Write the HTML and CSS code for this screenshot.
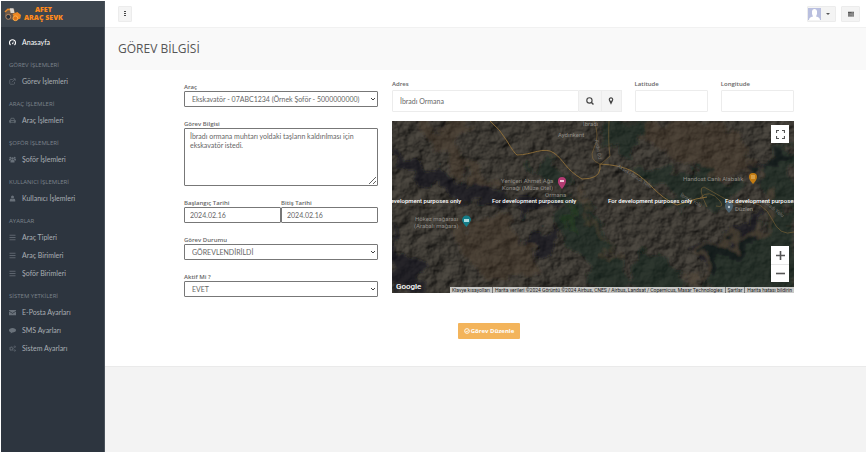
FILE: index.html
```html
<!DOCTYPE html>
<html lang="tr">
<head>
<meta charset="utf-8">
<title>Görev Bilgisi</title>
<link rel="stylesheet" href="styles.css">
</head>
<body>
<svg class="sprite" aria-hidden="true">
  <symbol id="gauge" viewBox="0 0 14 14"><path d="M3 12A6 6 0 1 1 11 12" fill="none" stroke="currentColor" stroke-width="2.200"/><path d="M5.700 10 9 4 8.500 10.500z" fill="currentColor"/></symbol>
  <symbol id="external" viewBox="0 0 14 14"><path d="M7.500 3H3Q1.500 3 1.500 4.500V11Q1.500 12.500 3 12.500H9.500Q11 12.500 11 11V8M6 8.500 12 2M8.500 1.500H12.500V5.500" fill="none" stroke="currentColor" stroke-width="1.300"/></symbol>
  <symbol id="car" viewBox="0 0 14 14"><path d="M3 6.500 4.200 2.500H9.800L11 6.500M1 7H13V10.500H1ZM2.500 10.500V12.500M11.500 10.500V12.500" fill="none" stroke="currentColor" stroke-width="1.500"/><path d="M2 8h2v1.500H2zM10 8h2v1.500h-2z" fill="currentColor"/></symbol>
  <symbol id="users" viewBox="0 0 14 14"><g fill="currentColor"><circle cx="7" cy="5" r="2.600"/><circle cx="2.600" cy="3.500" r="1.800"/><circle cx="11.400" cy="3.500" r="1.800"/><path d="M3 13V10Q3 7.800 5 7.800H9Q11 7.800 11 10V13ZM0 9V6.500Q0 5.500 1 5.500H3.500L4 7 2.500 9ZM14 9V6.500Q14 5.500 13 5.500H10.500L10 7 11.500 9Z"/></g></symbol>
  <symbol id="user" viewBox="0 0 14 14"><g fill="currentColor"><circle cx="7" cy="4.200" r="3"/><path d="M1.500 12.800V10.500Q1.500 7 4.500 7 7 9.500 9.500 7 12.500 7 12.500 10.500V12.800Z"/></g></symbol>
  <symbol id="bars" viewBox="0 0 14 14"><path d="M1 2.500H13M1 7H13M1 11.500H13" stroke="currentColor" stroke-width="1.600"/></symbol>
  <symbol id="mail" viewBox="0 0 14 14"><path d="M0 2H14V3.500L7 8 0 3.500ZM0 5.200 7 9.700 14 5.200V12.500H0Z" fill="currentColor"/></symbol>
  <symbol id="comment" viewBox="0 0 14 14"><path d="M7 2C11 2 14 4 14 6.500S11 11 7 11L3 13.200 3.800 10.500C1.500 9.800 0 8.300 0 6.500 0 4 3 2 7 2Z" fill="currentColor"/></symbol>
  <symbol id="cogs" viewBox="0 0 14 14"><g fill="none" stroke="currentColor"><circle cx="4.800" cy="7.300" r="2.600" stroke-width="1.600"/><circle cx="4.800" cy="7.300" r="4" stroke-width="1.400" stroke-dasharray="1.600 1.540"/><circle cx="11.500" cy="3.500" r="1.500" stroke-width="1.300"/><circle cx="11.500" cy="11" r="1.500" stroke-width="1.300"/></g></symbol>
  <symbol id="search" viewBox="0 0 14 14"><circle cx="6" cy="6" r="4.600" fill="none" stroke="currentColor" stroke-width="2"/><path d="M9.200 9.200 13 13" stroke="currentColor" stroke-width="2.400"/></symbol>
  <symbol id="pin" viewBox="0 0 14 14"><path fill-rule="evenodd" d="M7 0.500C9.500 0.500 11 2.300 11 4.500 11 6.500 8.500 10.500 7 13.500 5.500 10.500 3 6.500 3 4.500 3 2.300 4.500 0.500 7 0.500ZM7 2.600A2 2 0 1 0 7 6.600 2 2 0 1 0 7 2.600Z" fill="currentColor"/></symbol>
  <symbol id="check" viewBox="0 0 14 14"><circle cx="7" cy="7" r="5.500" fill="none" stroke="currentColor" stroke-width="2"/><path d="M4 7 6.300 9.300 10.300 5.200" fill="none" stroke="currentColor" stroke-width="2"/></symbol>
</svg>
<div class="app">
  <aside class="sidebar">
    <a class="brand" href="#">
      <svg class="brand-mark" viewBox="0 0 20 16" aria-hidden="true">
        <path d="M2 5 5 2 11 3 12 7 17 9 18 12 14 15 3 13 1 9Z" fill="#6f5947"/>
        <path d="M1 6 4 3 9 4 10 6" fill="none" stroke="#e98b2e" stroke-width="1.500"/>
        <path d="M6 2H10L11 7H7Z" fill="#ddd5cc"/>
        <path d="M9 8 14 6 18 9 17 13 12 14Z" fill="#ee8722"/>
        <circle cx="4.500" cy="11" r="2.600" fill="#29313b" stroke="#b98b68"/>
        <circle cx="12" cy="12.500" r="2.500" fill="#df7318" stroke="#ffb049"/>
      </svg>
      <span class="brand-name">AFET<br>ARAÇ SEVK</span>
    </a>
    <nav class="menu">
      <a class="item active" href="#"><svg><use href="#gauge"/></svg>Anasayfa</a>
      <h2>GÖREV İŞLEMLERİ</h2>
      <a class="item" href="#"><svg><use href="#external"/></svg>Görev İşlemleri</a>
      <h2>ARAÇ İŞLEMLERİ</h2>
      <a class="item" href="#"><svg><use href="#car"/></svg>Araç İşlemleri</a>
      <h2>ŞOFÖR İŞLEMLERİ</h2>
      <a class="item" href="#"><svg><use href="#users"/></svg>Şoför İşlemleri</a>
      <h2>KULLANICI İŞLEMLERİ</h2>
      <a class="item" href="#"><svg><use href="#user"/></svg>Kullanıcı İşlemleri</a>
      <h2>AYARLAR</h2>
      <a class="item" href="#"><svg><use href="#bars"/></svg>Araç Tipleri</a>
      <a class="item" href="#"><svg><use href="#bars"/></svg>Araç Birimleri</a>
      <a class="item" href="#"><svg><use href="#bars"/></svg>Şoför Birimleri</a>
      <h2>SİSTEM YETKİLERİ</h2>
      <a class="item" href="#"><svg><use href="#mail"/></svg>E-Posta Ayarları</a>
      <a class="item" href="#"><svg><use href="#comment"/></svg>SMS Ayarları</a>
      <a class="item" href="#"><svg><use href="#cogs"/></svg>Sistem Ayarları</a>
    </nav>
  </aside>
  <div class="page">
    <header class="topbar">
      <button class="tool" type="button" aria-label="Menü"><svg viewBox="0 0 6 6"><path d="M2 0H4V1H2ZM2 2H4V3H2ZM2 4H4V5H2Z" fill="#444"/></svg></button>
      <div class="tools">
        <button class="tool profile" type="button" aria-label="Profil">
          <svg class="avatar" viewBox="0 0 13 12"><path d="M0 0H13V12H0Z" fill="#b9bfdf"/><path d="M1 12Q1 9 5 8.500 3.500 6 4 3 4.500 1 6.500 1T9 3Q9.500 6 8 8.500 12 9 12 12Z" fill="#fff"/></svg>
          <span class="caret"></span>
        </button>
        <button class="tool" type="button" aria-label="Görevler"><svg viewBox="0 0 14 14"><path d="M0 2H14V5H0ZM0 6H14V9H0ZM0 10H14V13H0Z" fill="#555"/><path d="M8 3.500H13M5 7.500H13M9 11.500H13" stroke="#bbb"/></svg></button>
      </div>
    </header>
    <div class="heading"><h1>GÖREV BİLGİSİ</h1></div>
    <main class="content">
      <form class="form">
        <div class="details">
          <div class="field"><label for="arac">Araç</label>
            <select id="arac"><option>Ekskavatör - 07ABC1234 (Örnek Şoför - 5000000000)</option></select></div>
          <div class="field"><label for="bilgi">Görev Bilgisi</label>
            <textarea id="bilgi" spellcheck="false">İbradı ormana muhtarı yoldaki taşların kaldırılması için ekskavatör istedi.</textarea></div>
          <div class="dates">
            <div class="field"><label for="bas">Başlangıç Tarihi</label><input id="bas" type="text" value="2024.02.16"></div>
            <div class="field"><label for="bit">Bitiş Tarihi</label><input id="bit" type="text" value="2024.02.16"></div>
          </div>
          <div class="field"><label for="durum">Görev Durumu</label>
            <select id="durum"><option>GÖREVLENDİRİLDİ</option></select></div>
          <div class="field"><label for="aktif">Aktif Mi ?</label>
            <select id="aktif"><option>EVET</option></select></div>
        </div>
        <div class="location">
          <div class="place">
            <div class="field"><label for="adres">Adres</label>
              <div class="group"><input id="adres" type="text" value="İbradı Ormana"><button type="button" aria-label="Ara"><svg><use href="#search"/></svg></button><button type="button" aria-label="Konum"><svg><use href="#pin"/></svg></button></div></div>
            <div class="field"><label for="lat">Latitude</label><input id="lat" type="text"></div>
            <div class="field"><label for="lng">Longitude</label><input id="lng" type="text"></div>
          </div>
          <div class="map">
            <svg class="terrain" viewBox="0 0 402 172" preserveAspectRatio="xMidYMid slice">
              <defs>
                <filter id="ground" x="0" y="0" width="100%" height="100%" color-interpolation-filters="sRGB">
                  <feTurbulence type="fractalNoise" baseFrequency="0.07 0.08" numOctaves="6" seed="12" result="n"/>
                  <feColorMatrix in="n" values="0 0 0 0 0  0 0 0 0 0  0 0 0 0 0  1 0 0 0 0"/>
                  <feDiffuseLighting surfaceScale="3" diffuseConstant="1.1" lighting-color="#48443d">
                    <feDistantLight azimuth="220" elevation="50"/>
                  </feDiffuseLighting>
                </filter>
                <filter id="rough" x="-20%" y="-20%" width="140%" height="140%">
                  <feTurbulence type="fractalNoise" baseFrequency="0.05" numOctaves="6" seed="3" result="n"/>
                  <feDisplacementMap in="SourceGraphic" in2="n" scale="36" xChannelSelector="R" yChannelSelector="G" result="d"/>
                  <feGaussianBlur in="d" stdDeviation="1"/>
                </filter>
              </defs>
              <rect width="402" height="172" filter="url(#ground)"/>
              <g filter="url(#rough)">
                <g fill="#4d3e30" opacity="0.350"><path d="M20 0H85L65 25 110 70 85 68 45 35Z"/><path d="M225 0H330L370 50 330 60 270 30Z"/><path d="M50 100 120 95 150 150 90 160Z"/></g>
                <g fill="#17261d" opacity="0.550"><path d="M138 42 165 38 185 65 150 62Z"/><path d="M155 75 195 78 240 172H205L165 105Z"/><path d="M204 0H250L240 40 215 20Z"/><path d="M235 48 310 50 350 68 330 85 285 85Z"/><path d="M375 40 402 22V172H305L315 130 365 115 380 85 360 65Z"/><path d="M250 125 295 150 290 172H235Z"/></g>
                <g fill="#10171a" opacity="0.650"><path d="M0 28 50 52 90 66 122 80 110 87 60 74 10 50Z"/><path d="M125 82 165 70 160 90 130 92Z"/><path d="M130 115 165 108 160 140 140 132Z"/><path d="M300 133 340 114 372 85 363 118 320 150Z"/><path d="M360 48 402 30 390 55Z"/><path d="M0 108 30 145 25 172H0Z"/></g>
                <path d="M165 83 183 90 182 112Z" fill="#21421f" opacity="0.600"/>
                <path d="M382 65Q370 78 378 92T352 116Q325 122 310 140T298 172" fill="none" stroke="#55483a" stroke-width="4" opacity="0.700"/>
                <path d="M192 60Q190 90 207 114T225 140" fill="none" stroke="#5a4b38" stroke-width="2" opacity="0.600"/>
              </g>
              <g fill="none" stroke="#91703a" stroke-width="0.900">
                <path d="M98 0Q108 8 115 20T125 34C140 34 152 25 162 32S173 48 190 58Q207 58 208 48V43Q228 44 240 50C258 60 264 75 285 84L304 78 315 76"/>
                <path d="M202 0Q208 15 202 27T208 43M217 0Q216 22 218 35L209 43M315 86Q305 66 312 66L337 80 350 84M308 77Q317 67 328 80 333 87 324 85M350 80Q372 80 380 98T402 111" stroke-width="0.700" opacity="0.700"/>
              </g>
              <g class="places">
                <text x="191" y="5">İbradı</text><text x="166" y="16">Aydınkent</text>
                <text x="109" y="62">Yeniçeri Ahmet Ağa</text><text x="110" y="69">Konağı (Müze Otel)</text><text x="153" y="76">Ormana</text>
                <text x="23" y="100">Hökez mağarası</text><text x="22" y="107">(Arabalı mağara)</text>
                <text x="291" y="60">Handost Canlı Alabalık</text><text x="343" y="90">Düzlen</text>
              </g>
              <g class="places roads">
                <text x="203" y="19" transform="rotate(80 203 19)">Aydın Cd.</text><text x="225" y="46" transform="rotate(32 225 46)">Akseki-İbradı Yolu</text>
                <text x="288" y="75" transform="rotate(28 288 75)">İbradı Yolu</text><text x="372" y="82" transform="rotate(38 372 82)">İbradı Yolu</text>
              </g>
              <g><path d="M170 68Q165 62 166 60A4 4 0 1 1 174 60Q174 63 170 68" fill="#b33b72"/><path d="M168 59H172V61H168Z" fill="#f3c5d8"/>
              <path d="M74.500 106Q70 101 70 99A4 4 0 1 1 79 99Q78 102 74.500 106" fill="#147c87"/><path d="M72 98H77V101H72Z" fill="#a9dce0"/>
              <path d="M361 63Q357 59 357 56A4 4 0 1 1 365 56Q365 59 361 63" fill="#c27b12"/><path d="M360 54V58M362 54V58" stroke="#f5d398" stroke-width="0.800"/>
              <path d="M337 92Q333 88 333 85A4 4 0 1 1 341 85Q341 88 337 92" fill="#4e6370"/><circle cx="337" cy="86" r="1.200" fill="#b9c6ce"/></g>
              <g class="notice"><text x="-15" y="82">For development purposes only</text><text x="100" y="82">For development purposes only</text><text x="216" y="82">For development purposes only</text><text x="333" y="82">For development purposes only</text></g>
            </svg>
            <button class="fullscreen" type="button" aria-label="Tam ekran"><svg viewBox="0 0 9 9"><path d="M0.500 3V0.500H3M6 0.500H8.500V3M8.500 6V8.500H6M3 8.500H0.500V6" fill="none" stroke="#555" stroke-width="1.200"/></svg></button>
            <div class="zoom">
              <button type="button" aria-label="Yakınlaştır"><svg viewBox="0 0 9 9"><path d="M0 4.500H9M4.500 0V9" stroke="#555" stroke-width="1.600"/></svg></button>
              <button type="button" aria-label="Uzaklaştır"><svg viewBox="0 0 9 9"><path d="M0 4.500H9" stroke="#555" stroke-width="1.600"/></svg></button>
            </div>
            <span class="google">Google</span>
            <div class="credits"><a href="#">Klavye kısayolları</a><span>Harita verileri ©2024 Görüntü ©2024 Airbus, CNES / Airbus, Landsat / Copernicus, Maxar Technologies</span><a href="#">Şartlar</a><a href="#">Harita hatası bildirin</a></div>
          </div>
        </div>
        <button class="submit" type="submit"><svg><use href="#check"/></svg>Görev Düzenle</button>
      </form>
    </main>
  </div>
</div>
</body>
</html>
```
FILE: styles.css
```css
* { box-sizing: border-box; }
body { margin: 0; background: #fff; color: #666; font: 6px/8px "Open Sans", "Noto Sans", sans-serif; }
a { color: inherit; text-decoration: none; }
button, input, select, textarea { font: inherit; color: inherit; margin: 0; }
input, select, textarea { font-family: Lato, sans-serif; font-size: 7px; }
button { border: 0; padding: 0; background: #f4f4f4; display: flex; align-items: center; justify-content: center; }
h1, h2 { margin: 0; font-weight: 400; }
svg { display: block; flex: none; }
.sprite { position: absolute; width: 0; height: 0; }

.app { display: flex; min-height: 100vh; padding: 1px; }
.sidebar { flex: 0 0 104px; background: #2d353f; border-right: 1px solid #4a525b; }
.brand { display: flex; align-items: center; gap: 1px; height: 26px; padding-left: 3px; background: #3d454e; }
.brand-mark { width: 19px; height: 16px; }
.brand-name { color: #ff8a1c; font-size: 7px; line-height: 8px; font-weight: 800; text-align: center; }
.menu { padding-top: 6px; }
.menu h2 { height: 14px; margin-top: 7px; padding-left: 8px; color: #7c838b; font-size: 6px; line-height: 14px; }
.item { display: flex; align-items: center; gap: 6px; height: 18px; padding-left: 8px; color: #a9aeb3; font-family: Lato, sans-serif; font-size: 7px; }
.item svg { width: 7px; height: 7px; color: #69717a; }
.item.active, .item.active svg { color: #fff; }

.page { flex: 1; min-width: 0; background: #f3f3f3; }
.topbar { display: flex; align-items: center; justify-content: space-between; height: 26px; padding: 0 6px 0 13px; background: #fff; }
.tools { display: flex; gap: 5px; }
.tool { width: 14px; height: 16px; border: 1px solid #ececec; border-radius: 1px; }
.tool svg { width: 6px; height: 6px; }
.tools .tool { width: 19px; }
.tools .profile { width: 29px; gap: 5px; padding-right: 5px; }
.profile .avatar { width: 13px; height: 12px; }
.caret { border: 2px solid transparent; border-top-color: #555; border-bottom: 0; }
.heading { height: 43px; padding: 0 13px; background: #f9f9f9; border-top: 1px solid #f1f1f1; display: flex; align-items: center; }
h1 { font-size: 12px; line-height: 16px; color: #555; }
.content { background: #fff; border-bottom: 1px solid #eaeaea; padding: 10px 72px 27px 79px; }
.form { display: grid; grid-template-columns: minmax(0, 194fr) minmax(0, 402fr); column-gap: 14px; row-gap: 26px; }
.details { display: grid; align-content: start; gap: 13px; padding-top: 3px; }
.dates { display: grid; grid-template-columns: 1fr 1fr; }
.field { display: flex; flex-direction: column; min-width: 0; }
label { font-weight: 600; line-height: 8px; }
input, select, textarea { width: 100%; background: #fff; border: 1px solid #777; border-radius: 1px; }
.details input, .details select { height: 16px; padding: 0 5px; }
select { appearance: none; background: #fff url("data:image/svg+xml,%3Csvg xmlns='http://www.w3.org/2000/svg' viewBox='0 0 6 4'%3E%3Cpath d='M1 1l2 2 2-2' fill='none' stroke='%23444'/%3E%3C/svg%3E") no-repeat right 1px center / 6px 4px; }
.details select { padding: 0 7px; }
textarea { display: block; height: 58px; padding: 3px 5px; line-height: 9px; resize: vertical; }

.place { display: grid; grid-template-columns: minmax(0, 229fr) minmax(0, 73fr) minmax(0, 73fr); gap: 13px; padding-bottom: 9px; }
.place label { height: 10px; }
.place input { height: 22px; border-color: #ececec; padding: 0 7px; }
.group { display: flex; }
.group input { flex: 1; min-width: 0; border-radius: 1px 0 0 1px; }
.group button { width: 23px; height: 22px; border: 1px solid #ececec; border-left: 0; color: #444; }
.group button:last-child { width: 20px; }
.group svg { width: 8px; height: 8px; }

.map { position: relative; overflow: hidden; height: 172px; background: #2d2d29; }
.terrain { width: 100%; height: 100%; font-family: Roboto, sans-serif; }
.places { font-size: 6px; fill: #918d87; }
.roads { font-size: 5px; fill: #77736e; }
.notice { font-size: 6px; font-weight: 500; fill: #fff; }
.map button { width: 18px; height: 18px; background: #fff; }
.map button svg { width: 9px; height: 9px; }
.fullscreen, .zoom, .google, .credits { position: absolute; }
.fullscreen { top: 4px; right: 5px; }
.zoom { right: 5px; bottom: 11px; background: #fff; }
.zoom button + button { border-top: 1px solid #e6e6e6; }
.google { left: 4px; bottom: 1px; color: #fff; font: 500 8px/10px Roboto, sans-serif; }
.credits { right: 0; bottom: 0; display: flex; height: 6px; background: #c9c9c7; color: #222; font: 5px/6px Roboto, sans-serif; white-space: nowrap; }
.credits > * { padding: 0 2px; }
.credits > * + * { border-left: 1px solid #777; }

.submit { grid-column: 1 / -1; justify-self: center; display: flex; gap: 1px; height: 16px; padding: 0 6px; border-radius: 1px; background: #f3b45b; color: #fff; font-size: 6px; font-weight: 700; }
.submit svg { width: 6px; height: 6px; }
```
